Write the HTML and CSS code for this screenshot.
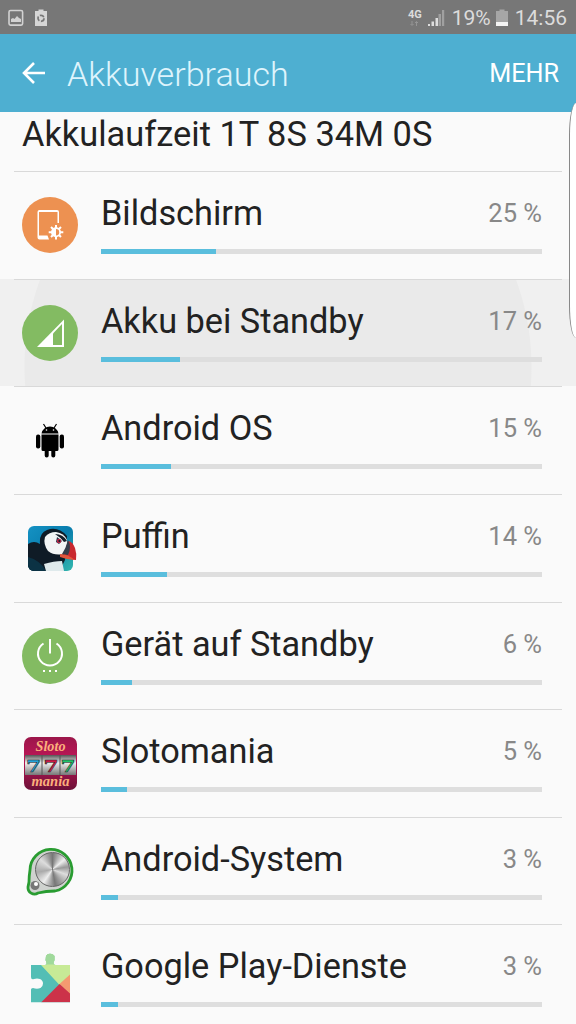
FILE: index.html
```html
<!DOCTYPE html>
<html lang="de">
<head>
  <meta charset="UTF-8" />
  <meta name="viewport" content="width=device-width, initial-scale=1.0" />
  <title>Akkuverbrauch</title>
  <link rel="stylesheet" href="styles.css">
</head>
<body>
  <div class="status-bar">
    <div class="status-left">
      <svg width="16" height="18" viewBox="0 0 16 18">
        <rect x="1" y="1.5" width="13.6" height="14.6" rx="1.5" fill="none" stroke="#d2d2d2" stroke-width="1.6"/>
        <path d="M3 13V10l2-1 1.500 1 2.500-3 2 2 2 1v3z" fill="#d2d2d2"/>
      </svg>
      <svg width="12" height="18" viewBox="0 0 12 18">
        <path d="M0 2h3.500V.5h5V2H12v15H0z" fill="#d6d6d6"/>
        <circle cx="6" cy="9.300" r="3" fill="none" stroke="#777" stroke-width="1.700" stroke-dasharray="4.700 1.580"/>
      </svg>
    </div>
    <div class="status-right">
      <div class="network"><span>4G</span>
        <svg width="9" height="5" viewBox="0 0 9 5"><path d="M2 0v4M.5 3L2 4.500 3.500 3M6.500 5V1M5 2L6.500.5 8 2" fill="none" stroke="#999" stroke-width=".9"/></svg>
      </div>
      <svg class="signal" width="17" height="18" viewBox="0 0 17 18">
        <path d="M0 17v-2h2v2zM3.500 17v-4.500h2.500V17zM7.500 17v-8h2.500v8z" fill="#dedede"/>
        <path d="M10.500 17V5H13v12zM14 17V1h2.200v16z" fill="#a0a0a0"/>
      </svg>
      <span class="level">19%</span>
      <svg class="battery" width="12" height="18" viewBox="0 0 12 18">
        <path d="M0 2h3.500V.5h5V2H12v11H0z" fill="#a6a6a6"/>
        <path d="M0 13h12v4H0z" fill="#f4f4f4"/>
      </svg>
      <span class="time">14:56</span>
    </div>
  </div>

  <header class="app-bar">
    <svg class="back" width="24" height="24" viewBox="0 0 24 24">
      <path d="M23 12H2M12 2L2 12l10 10" fill="none" stroke="#fff" stroke-width="2.600"/>
    </svg>
    <h1>Akkuverbrauch</h1>
    <span class="more">MEHR</span>
  </header>

  <main>
    <div class="runtime">Akkulaufzeit 1T 8S 34M 0S</div>

    <ul class="usage">
      <li class="row">
        <div class="row-inner">
          <svg class="icon" viewBox="0 0 56 56">
            <circle cx="28" cy="28" r="28" fill="#ed9151"/>
            <path d="M37 26V15q0-2-2-2H17.500q-2 0-2 2V40.500q0 2 2 2h9.500l-1.500-4H17V15h18.500V26z" fill="#fff"/>
            <path d="M34 28v14.500M26.700 35.200h14.600M29 30l10 10M39 30L29 40" stroke="#fff" stroke-width="2"/>
            <circle cx="34" cy="35.200" r="5" fill="#fff"/>
            <path d="M34 32a3.200 3.200 0 0 1 0 6.400z" fill="#ed9151"/>
          </svg>
          <div class="info">
            <div class="label"><span class="name">Bildschirm</span><span class="percent">25 %</span></div>
            <div class="bar"><div class="fill" style="width: 26.1%"></div></div>
          </div>
        </div>
      </li>
      <li class="row pressed">
        <div class="row-inner">
          <svg class="icon" viewBox="0 0 56 56">
            <circle cx="28" cy="28" r="28" fill="#83bb62"/>
            <path d="M15 42L42 14.500V42z" fill="#fff"/>
            <path d="M31 28.500l9-9.500v21h-9z" fill="#83bb62"/>
          </svg>
          <div class="info">
            <div class="label"><span class="name">Akku bei Standby</span><span class="percent">17 %</span></div>
            <div class="bar"><div class="fill" style="width: 17.9%"></div></div>
          </div>
        </div>
      </li>
      <li class="row">
        <div class="row-inner">
          <svg class="icon" viewBox="0 -2 56 56">
            <path d="M19.500 19.500a8.600 8.300 0 0 1 17 0z" fill="#000"/>
            <path d="M21.500 10l2.500 4M34.500 10L32 14" stroke="#000" stroke-width="1.200"/>
            <circle cx="24.500" cy="16" r=".8" fill="#fff"/><circle cx="31.500" cy="16" r=".8" fill="#fff"/>
            <path d="M19.500 20.500h17v15q0 1.500-1.500 1.500h-1.700v4.500a2 2 0 0 1-4 0V37h-2.600v4.500a2 2 0 0 1-4 0V37H21q-1.500 0-1.500-1.500z" fill="#000"/>
            <rect x="14" y="20.500" width="4.300" height="14" rx="2" fill="#000"/>
            <rect x="37.700" y="20.500" width="4.300" height="14" rx="2" fill="#000"/>
          </svg>
          <div class="info">
            <div class="label"><span class="name">Android OS</span><span class="percent">15 %</span></div>
            <div class="bar"><div class="fill" style="width: 15.9%"></div></div>
          </div>
        </div>
      </li>
      <li class="row">
        <div class="row-inner">
          <svg class="icon" viewBox="0 -1 56 56">
            <defs>
              <linearGradient id="sea" x1="0" y1="0" x2="1" y2="1"><stop offset="0" stop-color="#1592c4"/><stop offset=".5" stop-color="#087dad"/><stop offset="1" stop-color="#34b8ad"/></linearGradient>
              <clipPath id="tile"><rect x="6" y="5" width="45" height="45" rx="6"/></clipPath>
            </defs>
            <rect x="6" y="5" width="45" height="45" rx="6" fill="url(#sea)"/>
            <g clip-path="url(#tile)">
              <path d="M6 23q6-4 12 0-1-11 7-14 11-4 20 6l-2 24-6 12H6z" fill="#0f1b26"/>
              <path d="M6 36q12 3 18 14H6z" fill="#0b3244"/>
              <path d="M22 43q10-3 18-3l2 10H24z" fill="#dfeaec"/>
            </g>
            <path d="M23 16q4-5 11-5 8 1 11 8 1 8-3 14-10 2-16-3-5-7-3-14z" fill="#f3f5f5"/>
            <path d="M33 13q8 0 12 7l-3 1q-4-5-9-8z" fill="#161f2a"/>
            <path d="M35 16l5 4-3 3-3-2z" fill="#243246"/><circle cx="37" cy="20" r="2.200" fill="#bc2749"/><circle cx="37.300" cy="20" r="1" fill="#171b26"/>
            <path d="M46 20q5 1 7 7 2 6 1 12-7 0-12-5z" fill="#c9282f"/>
            <path d="M46 19q4 7 0 15l-6-1q4-6 6-14z" fill="#363d4a"/>
            <path d="M38 33q8 0 15 6-7 0-15-3z" fill="#e2553c"/>
          </svg>
          <div class="info">
            <div class="label"><span class="name">Puffin</span><span class="percent">14 %</span></div>
            <div class="bar"><div class="fill" style="width: 15%"></div></div>
          </div>
        </div>
      </li>
      <li class="row">
        <div class="row-inner">
          <svg class="icon" viewBox="0 0 56 56">
            <circle cx="28" cy="28" r="28" fill="#83bb62"/>
            <path d="M28 11v14.500M21.500 15.500a12 12 0 1 0 13 0" fill="none" stroke="#fff" stroke-width="2"/>
            <path d="M21 43h2M27 43h2M33 43h2" stroke="#fff" stroke-width="2"/>
          </svg>
          <div class="info">
            <div class="label"><span class="name">Gerät auf Standby</span><span class="percent">6 %</span></div>
            <div class="bar"><div class="fill" style="width: 7%"></div></div>
          </div>
        </div>
      </li>
      <li class="row">
        <div class="row-inner">
          <svg class="icon" viewBox="0 -1 56 56">
            <defs>
              <linearGradient id="reel" x1="0" y1="0" x2="0" y2="1"><stop offset="0" stop-color="#555"/><stop offset=".4" stop-color="#eee"/><stop offset="1" stop-color="#777"/></linearGradient>
              <linearGradient id="slot" x1="0" y1="0" x2="0" y2="1"><stop offset="0" stop-color="#9b164a"/><stop offset=".4" stop-color="#bb1656"/><stop offset="1" stop-color="#6d1138"/></linearGradient>
            </defs>
            <rect x="2" y="1" width="53" height="53" rx="7" fill="url(#slot)"/>
            <rect x="3" y="19" width="51" height="20" fill="url(#reel)"/>
            <path d="M20 19v20M38 19v20" stroke="#555" stroke-width="1"/>
            <text class="slot-word" x="28.500" y="15" text-anchor="middle" textLength="30" lengthAdjust="spacingAndGlyphs">Sloto</text>
            <text class="slot-seven" x="11.500" y="35.500" text-anchor="middle" textLength="15" lengthAdjust="spacingAndGlyphs" fill="#24a3d9">7</text>
            <text class="slot-seven" x="29" y="35.500" text-anchor="middle" textLength="15" lengthAdjust="spacingAndGlyphs" fill="#d01946">7</text>
            <text class="slot-seven" x="46" y="35.500" text-anchor="middle" textLength="15" lengthAdjust="spacingAndGlyphs" fill="#20c56a">7</text>
            <text class="slot-word" x="28.500" y="50" text-anchor="middle" textLength="38" lengthAdjust="spacingAndGlyphs">mania</text>
          </svg>
          <div class="info">
            <div class="label"><span class="name">Slotomania</span><span class="percent">5 %</span></div>
            <div class="bar"><div class="fill" style="width: 5.9%"></div></div>
          </div>
        </div>
      </li>
      <li class="row">
        <div class="row-inner">
          <div class="icon metal">
            <svg viewBox="0 0 56 56">
              <path d="M7 39Q7 33 8 27A21 21 0 1 1 33 48Q24 48 16 50A6.500 6.500 0 0 1 6 44z" fill="#cfd2cf" stroke="#299c31" stroke-width="2.800"/>
              <circle cx="13" cy="42.500" r="4.500" fill="#777"/><circle cx="14" cy="41" r="2" fill="#fff"/>
            </svg>
            <div class="knob"></div>
          </div>
          <div class="info">
            <div class="label"><span class="name">Android-System</span><span class="percent">3 %</span></div>
            <div class="bar"><div class="fill" style="width: 3.9%"></div></div>
          </div>
        </div>
      </li>
      <li class="row">
        <div class="row-inner">
          <svg class="icon" viewBox="0 -2.500 56 56">
            <defs>
              <clipPath id="puzzle"><path d="M9 12.500h14q2 0 1.500-2Q23 7 24 3.500 25 1 28 1t4.500 2.500Q33 7 31.500 10.500q0 2 2 2H48V50H9V37q0-1.500 2-1.500 4 1.500 7.500 0Q21 34 21 31t-3-4.500q-3-1-6 0-3 1-3-2z"/></clipPath>
            </defs>
            <g clip-path="url(#puzzle)">
              <path d="M9 0h40v51H9z" fill="#53beb5"/>
              <path d="M20 12.500V0h15l14 12.500v10.500L38 33 19 12.500z" fill="#c7ea96"/>
              <path d="M20 0h15v12H20z" fill="#a0d99b"/>
              <path d="M48 22L37.500 31.500 48 42z" fill="#f49a70"/>
              <path d="M37.500 31.500L19 50h30V42z" fill="#cc3249"/>
            </g>
          </svg>
          <div class="info">
            <div class="label"><span class="name">Google Play-Dienste</span><span class="percent">3 %</span></div>
            <div class="bar"><div class="fill" style="width: 3.9%"></div></div>
          </div>
        </div>
      </li>
    </ul>
  </main>

  <div class="edge-handle"></div>
</body>
</html>
```
FILE: styles.css
```css
* {
  box-sizing: border-box;
}
body, html {
  margin: 0;
  padding: 0;
  height: 100%;
  overflow: hidden;
  font-family: Roboto, "Liberation Sans", sans-serif;
  background: #fafafa;
  color: #222;
}
body {
  position: relative;
}

.status-bar {
  height: 34px;
  padding: 1px 9px 0 8px;
  display: flex;
  justify-content: space-between;
  align-items: center;
  background: #777;
  color: #dcdcdc;
  font-size: 21px;
}
.status-left, .status-right {
  display: flex;
  align-items: center;
}
.status-left {
  gap: 11px;
}
.network {
  display: flex;
  flex-direction: column;
  align-items: center;
  gap: 2px;
  margin-right: 6px;
  font-size: 11px;
  line-height: 9px;
  font-weight: bold;
}
.level {
  margin: 0 5px 0 7px;
}
.time {
  margin-left: 7px;
}

.app-bar {
  height: 78px;
  padding: 0 17px 0 22px;
  display: flex;
  align-items: center;
  background: #4eafd1;
  color: #fff;
}
.app-bar h1 {
  flex: 1;
  margin: 1px 0 0 21px;
  font-size: 34.1px;
  font-weight: 300;
  color: #def4fc;
}
.more {
  margin-top: 1px;
  font-size: 25.2px;
}

.runtime {
  height: 59px;
  padding-left: 22px;
  font-size: 34.4px;
  line-height: 44px;
  white-space: nowrap;
}

.usage {
  margin: 0;
  padding: 0;
  list-style: none;
}
.row {
  height: 107.65px;
  padding: 0 14px;
}
.row-inner {
  height: 100%;
  padding: 25px 20px 0 8px;
  display: flex;
  gap: 23px;
  border-top: 1px solid #d9d9d9;
}
.pressed {
  background: radial-gradient(circle 254px at 278px 88px, #eaeaea 253px, #f0f0f0 254px);
}
.icon {
  width: 56px;
  height: 56px;
  flex: none;
}
.info {
  flex: 1;
}
.label {
  height: 52px;
  display: flex;
  justify-content: space-between;
}
.name {
  font-size: 34.3px;
  line-height: 32px;
  white-space: nowrap;
}
.percent {
  font-size: 25.5px;
  line-height: 33px;
  color: #888;
}
.bar {
  height: 5px;
  background: #dedede;
}
.fill {
  height: 100%;
  background: #5abedd;
}

.slot-word {
  font: italic bold 14px "Liberation Serif", serif;
  fill: #fbb07c;
}
.slot-seven {
  font: bold 17px "DejaVu Serif", serif;
  stroke: #222;
  stroke-width: 0.5px;
}

.metal {
  position: relative;
}
/* brushed disc on top of the green plate */
.knob {
  position: absolute;
  left: 13px;
  top: 9px;
  width: 35px;
  height: 35px;
  border: 1px solid #666;
  border-radius: 50%;
  background: conic-gradient(#777, #eee 50deg, #999 80deg, #ddd 110deg, #777 170deg, #eee 215deg, #aaa 260deg, #ddd 310deg, #777);
}

.edge-handle {
  position: absolute;
  right: 0;
  top: 103px;
  width: 7px;
  height: 235px;
  border-left: 1px solid #888;
  border-radius: 7px 0 0 7px / 32px 0 0 32px;
  background: #fff;
}
```
